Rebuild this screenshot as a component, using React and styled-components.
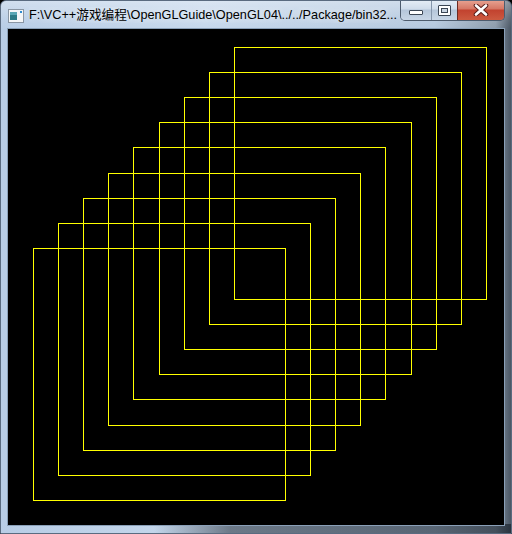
import styled, { createGlobalStyle } from 'styled-components';

const GlobalStyle = createGlobalStyle`
  html, body {
    margin: 0;
    padding: 0;
    background: #000;
  }
  body {
    width: 512px;
    height: 534px;
    overflow: hidden;
  }
`;

// square corners in screen pixels (left, top), each 252px wide
const SQUARES = [
  [33, 248],
  [58, 223],
  [83, 198],
  [108, 173],
  [133, 147],
  [159, 122],
  [184, 97],
  [209, 72],
  [234, 47],
];

const CLIENT_X = 8;
const CLIENT_Y = 29;

export default function App() {
  return (
    <>
      <GlobalStyle />
      <Window>
        <TitleBar>
          <AppIcon />
          <Title>F:\VC++游戏编程\OpenGLGuide\OpenGL04\../../Package/bin32...</Title>
          <Captions>
            <CaptionButton $w={30}>
              <MinGlyph />
            </CaptionButton>
            <CaptionButton $w={26}>
              <MaxGlyph />
            </CaptionButton>
            <CaptionButton $w={47} $close>
              <CloseGlyph />
            </CaptionButton>
          </Captions>
        </TitleBar>
        <Frame>
          <Canvas>
            <svg width='496' height='496' viewBox='0 0 496 496'>
              {SQUARES.map(([x, y]) => (
                <rect
                  key={x}
                  x={x - CLIENT_X + 0.5}
                  y={y - CLIENT_Y + 0.5}
                  width='252'
                  height='252'
                  fill='none'
                  stroke='#ffff00'
                  strokeWidth='1'
                  shapeRendering='crispEdges'
                />
              ))}
            </svg>
          </Canvas>
        </Frame>
      </Window>
    </>
  );
}

function AppIcon() {
  return (
    <IconBox>
      <svg width='16' height='16' viewBox='0 0 16 16'>
        <rect x='0.5' y='1.5' width='15' height='13' fill='#f4f6f8' stroke='#8a96a4' />
        <rect x='2' y='4' width='7' height='8' fill='#2d7a86' />
        <rect x='2' y='4' width='7' height='3' fill='#59a6b4' />
        <rect x='12' y='3' width='2' height='2' fill='#2e8bd0' />
      </svg>
    </IconBox>
  );
}

function MinGlyph() {
  return (
    <svg width='14' height='6' viewBox='0 0 14 6' style={{ marginTop: 6 }}>
      <rect x='0.5' y='0.5' width='13' height='4' fill='#fff' stroke='#3b4654' rx='0.5' />
    </svg>
  );
}

function MaxGlyph() {
  return (
    <svg width='13' height='11' viewBox='0 0 13 11'>
      <rect x='0.5' y='0.5' width='12' height='10' fill='#fff' stroke='#3b4654' rx='0.5' />
      <rect x='3.5' y='3.5' width='6' height='4' fill='#c9d4e1' stroke='#3b4654' />
    </svg>
  );
}

function CloseGlyph() {
  return (
    <svg width='16' height='12' viewBox='0 0 16 12'>
      <path d='M3 1.5 L13 10.5 M13 1.5 L3 10.5' stroke='#5a1e1a' strokeWidth='4.6' strokeLinecap='round' />
      <path d='M3 1.5 L13 10.5 M13 1.5 L3 10.5' stroke='#fff' strokeWidth='2.6' strokeLinecap='round' />
    </svg>
  );
}

const Window = styled.div`
  width: 512px;
  height: 534px;
  display: flex;
  flex-direction: column;
  background: linear-gradient(90deg, #b8cde6 0%, #c6d8ec 40%, #b4c8de 85%, #8c9bab 97%, #4a5664 100%);
  border-radius: 6px 6px 0 0;
  box-sizing: border-box;
  border: 1px solid #5a6b80;
  overflow: hidden;
`;

const TitleBar = styled.div`
  height: 28px;
  display: flex;
  align-items: flex-start;
  background: linear-gradient(180deg, rgba(255, 255, 255, 0.35) 0%, rgba(255, 255, 255, 0.1) 60%, rgba(0, 0, 0, 0) 100%);
`;

const IconBox = styled.div`
  width: 16px;
  height: 16px;
  margin: 7px 0 0 7px;
`;

const Title = styled.div`
  margin: 6px 0 0 5px;
  flex: 1;
  font-family: 'Liberation Sans', 'Noto Sans CJK SC', sans-serif;
  font-size: 12.7px;
  line-height: 16px;
  color: #000;
  white-space: nowrap;
  overflow: hidden;
  text-shadow: 0 0 8px rgba(255, 255, 255, 0.9);
`;

const Captions = styled.div`
  display: flex;
  margin-right: 6px;
  margin-top: -1px;
  border: 1px solid #4d5b6d;
  border-top: none;
  border-radius: 0 0 5px 5px;
  overflow: hidden;
`;

const CaptionButton = styled.div`
  width: ${(p) => p.$w}px;
  height: 20px;
  display: flex;
  align-items: center;
  justify-content: center;
  box-sizing: border-box;
  border-left: ${(p) => (p.$close ? '1px solid #6d2a22' : '1px solid #8596ab')};
  background: ${(p) =>
    p.$close
      ? 'linear-gradient(180deg, #e8a493 0%, #d57664 45%, #c2422f 50%, #cc5a40 100%)'
      : 'linear-gradient(180deg, #e6eef7 0%, #cfdceb 45%, #b5c6da 50%, #c8d6e6 100%)'};
  &:first-child {
    border-left: none;
  }
`;

const Frame = styled.div`
  flex: 1;
  display: flex;
  padding: 0 7px 8px 7px;
  background: linear-gradient(90deg, rgba(255, 255, 255, 0) 0%, rgba(0, 0, 0, 0) 30%, rgba(20, 28, 38, 0.5) 45%, rgba(20, 28, 38, 0.6) 100%) bottom / 100% 9px no-repeat;
`;

const Canvas = styled.div`
  width: 496px;
  height: 496px;
  background: #000;
  box-shadow: 0 0 0 1px #8aa0b8;
  svg {
    display: block;
  }
`;
